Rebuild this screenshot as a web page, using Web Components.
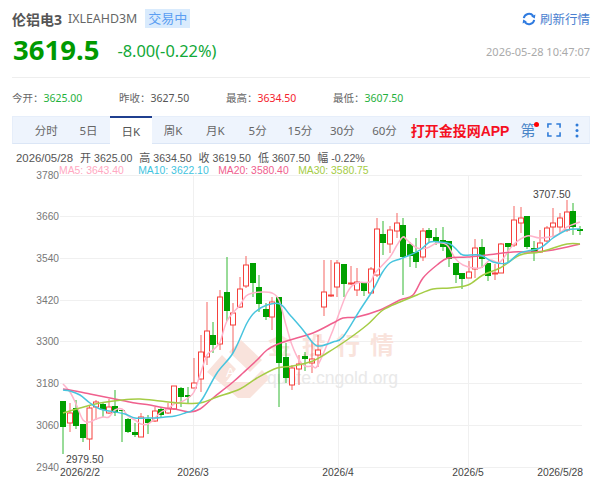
<!DOCTYPE html>
<html>
<head>
<meta charset="utf-8">
<style>
  html, body { margin: 0; background: #fff; }
  body { width: 600px; height: 479px; overflow: hidden; font-family: "Noto Sans", "Noto Sans CJK SC", sans-serif; }
</style>
</head>
<body>
<quote-header name="伦铝电3" code="IXLEAHD3M" state="交易中" price="3619.5" change="-8.00(-0.22%)" time="2026-05-28 10:47:07"></quote-header>
<quote-stats></quote-stats>
<chart-toolbar></chart-toolbar>
<kline-legend></kline-legend>
<kline-chart></kline-chart>

<script>
// top block: name, code, state badge, price and refresh link
class QuoteHeader extends HTMLElement {
  connectedCallback() {
    const a = (n) => this.getAttribute(n);
    this.attachShadow({ mode: 'open' }).innerHTML = `
    <style>
      :host { display: block; margin: 0 10px 0 12px; height: 78px; box-sizing: border-box; border-bottom: 1px solid #eee; padding-top: 9px; }
      .row { display: flex; align-items: center; }
      .row1 { height: 19px; }
      .row2 { height: 30px; margin-top: 7px; }
      .name { font-size: 14px; font-weight: 700; color: #555; }
      .code { font-size: 12.4px; color: #666; margin-left: 6px; }
      .badge { font-size: 13px; line-height: 19px; color: #5b9ef2; background: #d9ebfd; padding: 0 3px; margin-left: 8px; }
      .refresh { margin-left: auto; display: flex; align-items: center; gap: 4px; font-size: 12.5px; color: #4a7fd0; }
      .price { font-size: 27.5px; font-weight: 700; color: #009900; line-height: 30px; margin-left: 1px; }
      .change { font-size: 16.4px; color: #12a838; margin-left: 18px; }
      .time { margin-left: auto; font-size: 11px; color: #aaa; padding-top: 2px; }
    </style>
    <div class="row row1">
      <span class="name">${a('name')}</span>
      <span class="code">${a('code')}</span>
      <span class="badge">${a('state')}</span>
      <span class="refresh">
        <svg width="14" height="14" viewBox="0 0 14 14">
          <path d="M1.8 6.2 A5.3 5.3 0 0 1 11.2 3.8" fill="none" stroke="#2f7be0" stroke-width="2"/>
          <path d="M12.2 7.8 A5.3 5.3 0 0 1 2.8 10.2" fill="none" stroke="#2f7be0" stroke-width="2"/>
          <path d="M13.4 2.6 L12.8 6.6 L9.2 4.6 Z" fill="#2f7be0"/>
          <path d="M0.6 11.4 L1.2 7.4 L4.8 9.4 Z" fill="#2f7be0"/>
        </svg>
        <span>刷新行情</span>
      </span>
    </div>
    <div class="row row2">
      <span class="price">${a('price')}</span>
      <span class="change">${a('change')}</span>
      <span class="time">${a('time')}</span>
    </div>`;
  }
}
customElements.define('quote-header', QuoteHeader);

// today's open / previous close / high / low
class QuoteStats extends HTMLElement {
  connectedCallback() {
    const items = [
      ['今开：', '3625.00', '#1fb13c'],
      ['昨收：', '3627.50', '#555'],
      ['最高：', '3634.50', '#f5222d'],
      ['最低：', '3607.50', '#1fb13c'],
    ];
    this.attachShadow({ mode: 'open' }).innerHTML = `
    <style>
      :host { display: grid; grid-template-columns: repeat(4, 107px); margin-left: 12px; height: 38px; align-items: center; font-size: 10.5px; color: #666; }
    </style>
    ${items.map(i => `<div>${i[0]}<span style="color:${i[2]}">${i[1]}</span></div>`).join('')}`;
  }
}
customElements.define('quote-stats', QuoteStats);

// period tabs with the app link and tool icons
class ChartToolbar extends HTMLElement {
  connectedCallback() {
    const tabs = ['分时', '5日', '日K', '周K', '月K', '5分', '15分', '30分', '60分'];
    this.attachShadow({ mode: 'open' }).innerHTML = `
    <style>
      :host { display: flex; align-items: stretch; margin: 0 10px 0 12px; height: 28px; box-sizing: border-box; background: #eef4fd; border: 1px solid #e6eefa; border-bottom-color: #dbe6f6; }
      .tabs { display: grid; grid-template-columns: repeat(9, 42.3px); margin-left: 12px; }
      .tab { display: flex; align-items: center; justify-content: center; font-size: 11.5px; color: #666; margin-top: -1px; margin-bottom: -1px; }
      .tab.on { background: #fff; border-top: 2px solid #1f3f8f; color: #555; box-sizing: border-box; }
      .app { font-size: 14px; font-weight: 700; color: #f5101f; margin-left: 5px; align-self: center; white-space: nowrap; font-family: "Liberation Sans", "Noto Sans CJK SC", sans-serif; }
      .tools { position: relative; display: flex; align-items: center; margin-left: 11px; }
      .ce { font-size: 15px; color: #4a86c8; line-height: 1; width: 15px; }
      .dot { position: absolute; left: 14px; top: 5px; width: 5px; height: 5px; border-radius: 50%; background: #f00; }
    </style>
    <div class="tabs">${tabs.map(t => `<div class="tab${t === '日K' ? ' on' : ''}">${t}</div>`).join('')}</div>
    <div class="app">打开金投网APP</div>
    <div class="tools">
      <span class="ce">第</span><span class="dot"></span>
      <svg width="14" height="14" viewBox="0 0 15 15" style="margin-left:12px">
        <path d="M1 5 V1 H5 M10 1 H14 V5 M14 10 V14 H10 M5 14 H1 V10" fill="none" stroke="#2f7bd8" stroke-width="1.7"/>
      </svg>
      <svg width="4" height="15" viewBox="0 0 4 15" style="margin-left:14px">
        <circle cx="2" cy="2" r="1.5" fill="#2f7bd8"/><circle cx="2" cy="7.5" r="1.5" fill="#2f7bd8"/><circle cx="2" cy="13" r="1.5" fill="#2f7bd8"/>
      </svg>
    </div>`;
  }
}
customElements.define('chart-toolbar', ChartToolbar);

// OHLC and moving average legend above the chart
class KlineLegend extends HTMLElement {
  connectedCallback() {
    const ohlc = [['开', '3625.00'], ['高', '3634.50'], ['收', '3619.50'], ['低', '3607.50'], ['幅', '-0.22%']];
    this.attachShadow({ mode: 'open' }).innerHTML = `
    <style>
      :host { display: block; font-family: "Liberation Sans", "Noto Sans CJK SC", sans-serif; height: 26px; box-sizing: border-box; padding: 8px 0 0 16px; position: relative; z-index: 1; }
      .ohlc { display: flex; gap: 7px; font-size: 10.6px; color: #555; line-height: 13px; white-space: nowrap; }
      .ohlc .date { font-size: 11.4px; }
      .ohlc b { font-weight: 400; font-size: 11px; margin-right: 3px; }
      .ma { display: flex; padding-left: 43px; font-size: 10.4px; line-height: 12px; white-space: nowrap; }
    </style>
    <div class="ohlc"><span class="date">2026/05/28</span>${ohlc.map(o => `<span><b>${o[0]}</b>${o[1]}</span>`).join('')}</div>
    <div class="ma">
      <span style="color:#ffa9c2">MA5: 3643.40</span>
      <span style="color:#3fc4e0;margin-left:14.5px">MA10: 3622.10</span>
      <span style="color:#f0608e;margin-left:9.5px">MA20: 3580.40</span>
      <span style="color:#a5cc45;margin-left:9.5px">MA30: 3580.75</span>
    </div>`;
  }
}
customElements.define('kline-legend', KlineLegend);

// x, wick top, wick bottom, body top, body bottom, 1 = up (red outline) 0 = down (green)
const candles = [
  [63,401,454,401,427,0],[70,403,432,413,423,1],[76,400,429,408,426,0],[83,424,442,424,438,0],[89.5,405,450,408,439,1],
  [96,400,420,402,407,1],[103,403,417,404,410,0],[109,399,414,407,413,1],[115,390,416,406,413,0],[122,410,442,410,411,0],
  [128,418,433,419,432,0],[135,423,437,432,435,0],[141,413,437,417,437,1],[148,415,434,419,423,0],[155,407,422,411,421,1],
  [161,407,418,409,415,0],[168,403,414,409,413,1],[174,386,410,386,409,1],[181,387,407,388,397,0],[188,387,403,395,397,0],
  [194,358,388,383,388,1],[201,335,392,352,379,1],[207,302,365,331,357,1],[213,322,353,335,345,0],[220,290,350,297,344,1],
  [227,257,321,292,311,0],[233,303,353,313,325,1],[240,277,308,289,307,1],[246,256,288,265,286,1],[253,263,297,263,283,0],
  [259,275,312,287,304,0],[266,303,320,309,317,0],[272,297,330,302,317,1],[279,297,407,297,363,0],[286,343,383,357,378,0],
  [292,365,390,368,385,1],[299,355,385,364,369,1],[305,352,371,356,359,0],[312,342,373,359,363,1],[318,335,367,350,355,1],
  [324,260,316,292,307,1],[331,260,297,295,296,1],[337,260,297,263,287,1],[344,264,297,264,284,0],[351,266,285,283,284,1],
  [357,268,296,282,290,1],[364,282,296,282,291,0],[371,267,293,269,293,1],[377,218,277,229,275,1],[383,221,255,234,243,0],
  [390,226,253,230,244,1],[397,213,238,223,231,1],[403,218,295,225,257,0],[410,242,267,244,256,0],[416,238,268,252,262,0],
  [423,228,261,231,257,1],[429,228,243,230,238,0],[436,228,245,237,242,0],[443,227,251,240,247,0],[449,241,267,241,259,0],
  [456,263,283,263,275,0],[462,273,289,273,279,0],[469,261,278,272,278,1],[475,239,278,248,269,1],[482,239,268,247,259,0],
  [488,263,281,263,276,0],[495,264,280,273,274,1],[501,243,273,244,273,1],[508,243,262,243,247,0],[514,206,247,220,245,1],
  [521,207,233,218,223,1],[527,216,249,216,247,0],[534,241,261,248,252,0],[540,230,253,243,252,1],[547,226,242,228,241,1],
  [553,208,237,223,227,1],[560,213,233,218,227,1],[567,200,232,212,230,1],[573,203,235,211,227,0],[580,226,235,229,231,0],
];

// moving average lines, traced as screen points
const lines = {
  '#ffb4cb': [[63,384],[70,392],[76,404],[83,420],[90,422],[96,419],[103,417],[109,417],[115,410],[122,409],[128,416],[135,420],[141,424],[148,424],[155,418],[161,412],[168,409],[174,404],[181,402],[188,398],[194,392],[200,375],[207,355],[213,350],[220,342],[227,321],[240,305],[246,296],[253,293],[262,292],[272,293],[279,300],[286,325],[292,345],[299,360],[305,366],[312,366],[318,365],[333,330],[347,293],[357,283],[370,282],[375,273],[390,257],[397,245],[403,237],[407,240],[417,248],[427,248],[437,243],[447,245],[455,258],[463,265],[480,268],[490,260],[500,262],[513,245],[527,236],[540,238],[557,235],[567,227],[580,222]],
  '#f0608e': [[63,389],[75,391],[90,394],[105,397],[120,400],[135,403],[150,405],[165,408],[175,409],[190,412],[200,409],[213,398],[233,382],[243,373],[257,360],[267,350],[278,344],[290,340],[313,333],[333,323],[343,318],[357,317],[380,310],[400,300],[413,295],[423,278],[437,265],[448,258],[467,257],[487,255],[513,252],[533,252],[553,250],[580,244]],
  '#a5cc45': [[63,413],[80,408],[100,403],[122,400],[140,399],[160,401],[180,403],[200,403],[217,397],[240,389],[257,378],[277,368],[293,366],[313,361],[327,353],[347,340],[367,325],[383,310],[400,302],[417,295],[433,289],[450,288],[468,285],[483,275],[500,268],[520,255],[540,252],[567,244],[580,244]],
  '#48c4de': [[63,390],[70,391],[80,395],[90,403],[100,409],[115,412],[125,414],[135,418],[145,418],[155,418],[165,417],[175,416],[185,413],[193,410],[203,398],[217,373],[233,353],[247,323],[255,312],[267,305],[280,304],[290,315],[303,330],[313,343],[320,346],[333,342],[343,337],[360,310],[373,290],[382,273],[390,263],[400,259],[410,255],[420,250],[430,242],[440,242],[450,244],[457,250],[463,255],[480,255],[493,262],[507,263],[520,253],[540,248],[553,238],[567,230],[580,229]],
};

// smooth path through the traced points
function smooth(pts) {
  let d = `M${pts[0][0]} ${pts[0][1]}`;
  for (let i = 0; i < pts.length - 1; i++) {
    const p0 = pts[i - 1] || pts[i], p1 = pts[i], p2 = pts[i + 1], p3 = pts[i + 2] || p2;
    const c1x = p1[0] + (p2[0] - p0[0]) / 6, c1y = p1[1] + (p2[1] - p0[1]) / 6;
    const c2x = p2[0] - (p3[0] - p1[0]) / 6, c2y = p2[1] - (p3[1] - p1[1]) / 6;
    d += ` C${c1x.toFixed(1)} ${c1y.toFixed(1)} ${c2x.toFixed(1)} ${c2y.toFixed(1)} ${p2[0]} ${p2[1]}`;
  }
  return d;
}

// the candlestick chart; svg uses page coordinates through its viewBox
class KlineChart extends HTMLElement {
  connectedCallback() {
    const top = 170;
    const gridY = [175, 216, 258, 300, 341, 383, 425, 467];
    const labels = ['3780', '3660', '3540', '3420', '3300', '3180', '3060', '2940'];
    const gridX = [193, 338, 468];
    const dates = [['2026/2/2', 60, 'start'], ['2026/3', 193, 'middle'], ['2026/4', 338, 'middle'], ['2026/5', 468, 'middle'], ['2026/5/28', 583, 'end']];

    let s = '';
    gridY.forEach((y, i) => {
      s += `<line x1="60" x2="582" y1="${y + .5}" y2="${y + .5}" stroke="#f0f0f0"/>`;
      s += `<text x="59" y="${y + 3.5}" text-anchor="end" fill="#777" font-size="10.2">${labels[i]}</text>`;
    });
    gridX.forEach(x => { s += `<line x1="${x + .5}" x2="${x + .5}" y1="175" y2="467" stroke="#f0f0f0"/>`; });
    dates.forEach(d => { s += `<text x="${d[1]}" y="476" text-anchor="${d[2]}" fill="#444" font-size="10.3">${d[0]}</text>`; });

    // watermark sits under the candles
    s += `<g fill="#f9e3dc">
      <path d="M241 340 L262 360 L250 372 L229 352 Z"/>
      <path d="M222 355 L236 369 L226 382 L250 382 L262 370 L270 378 L250 398 L238 398 L207 372 Z"/>
      <text x="268" y="354" font-size="24" font-weight="700" font-family="'Noto Sans CJK SC', sans-serif" letter-spacing="10">金投行情</text>
    </g>
    <text x="226" y="377" font-size="13" fill="#fff">Au</text>
    <text x="267" y="384" font-size="17.6" fill="#e9e9e9">quote.cngold.org</text>`;

    candles.forEach(c => {
      const [x, wt, wb, bt, bb, up] = c;
      const col = up ? '#f5413d' : '#00a800';
      s += `<line x1="${x}" x2="${x}" y1="${wt}" y2="${wb}" stroke="${col}" opacity=".8"/>`;
      if (up) s += `<rect x="${x - 2.5}" y="${bt}" width="5" height="${Math.max(bb - bt, 1)}" fill="#fff" stroke="#f5413d"/>`;
      else s += `<rect x="${x - 3}" y="${bt}" width="6" height="${Math.max(bb - bt, 1)}" fill="#00a000"/>`;
    });
    Object.keys(lines).forEach(col => {
      s += `<path d="${smooth(lines[col])}" fill="none" stroke="${col}" stroke-width="1.5"/>`;
    });
    s += `<text x="533" y="198" fill="#444" font-size="10.4">3707.50</text>`;
    s += `<text x="66" y="463" fill="#444" font-size="10.4">2979.50</text>`;

    this.attachShadow({ mode: 'open' }).innerHTML = `
    <style>
      :host { display: block; height: ${479 - top}px; }
      svg { display: block; font-family: "Liberation Sans", sans-serif; }
    </style>
    <svg width="600" height="${479 - top}" viewBox="0 ${top} 600 ${479 - top}">${s}</svg>`;
  }
}
customElements.define('kline-chart', KlineChart);
</script>
</body>
</html>
